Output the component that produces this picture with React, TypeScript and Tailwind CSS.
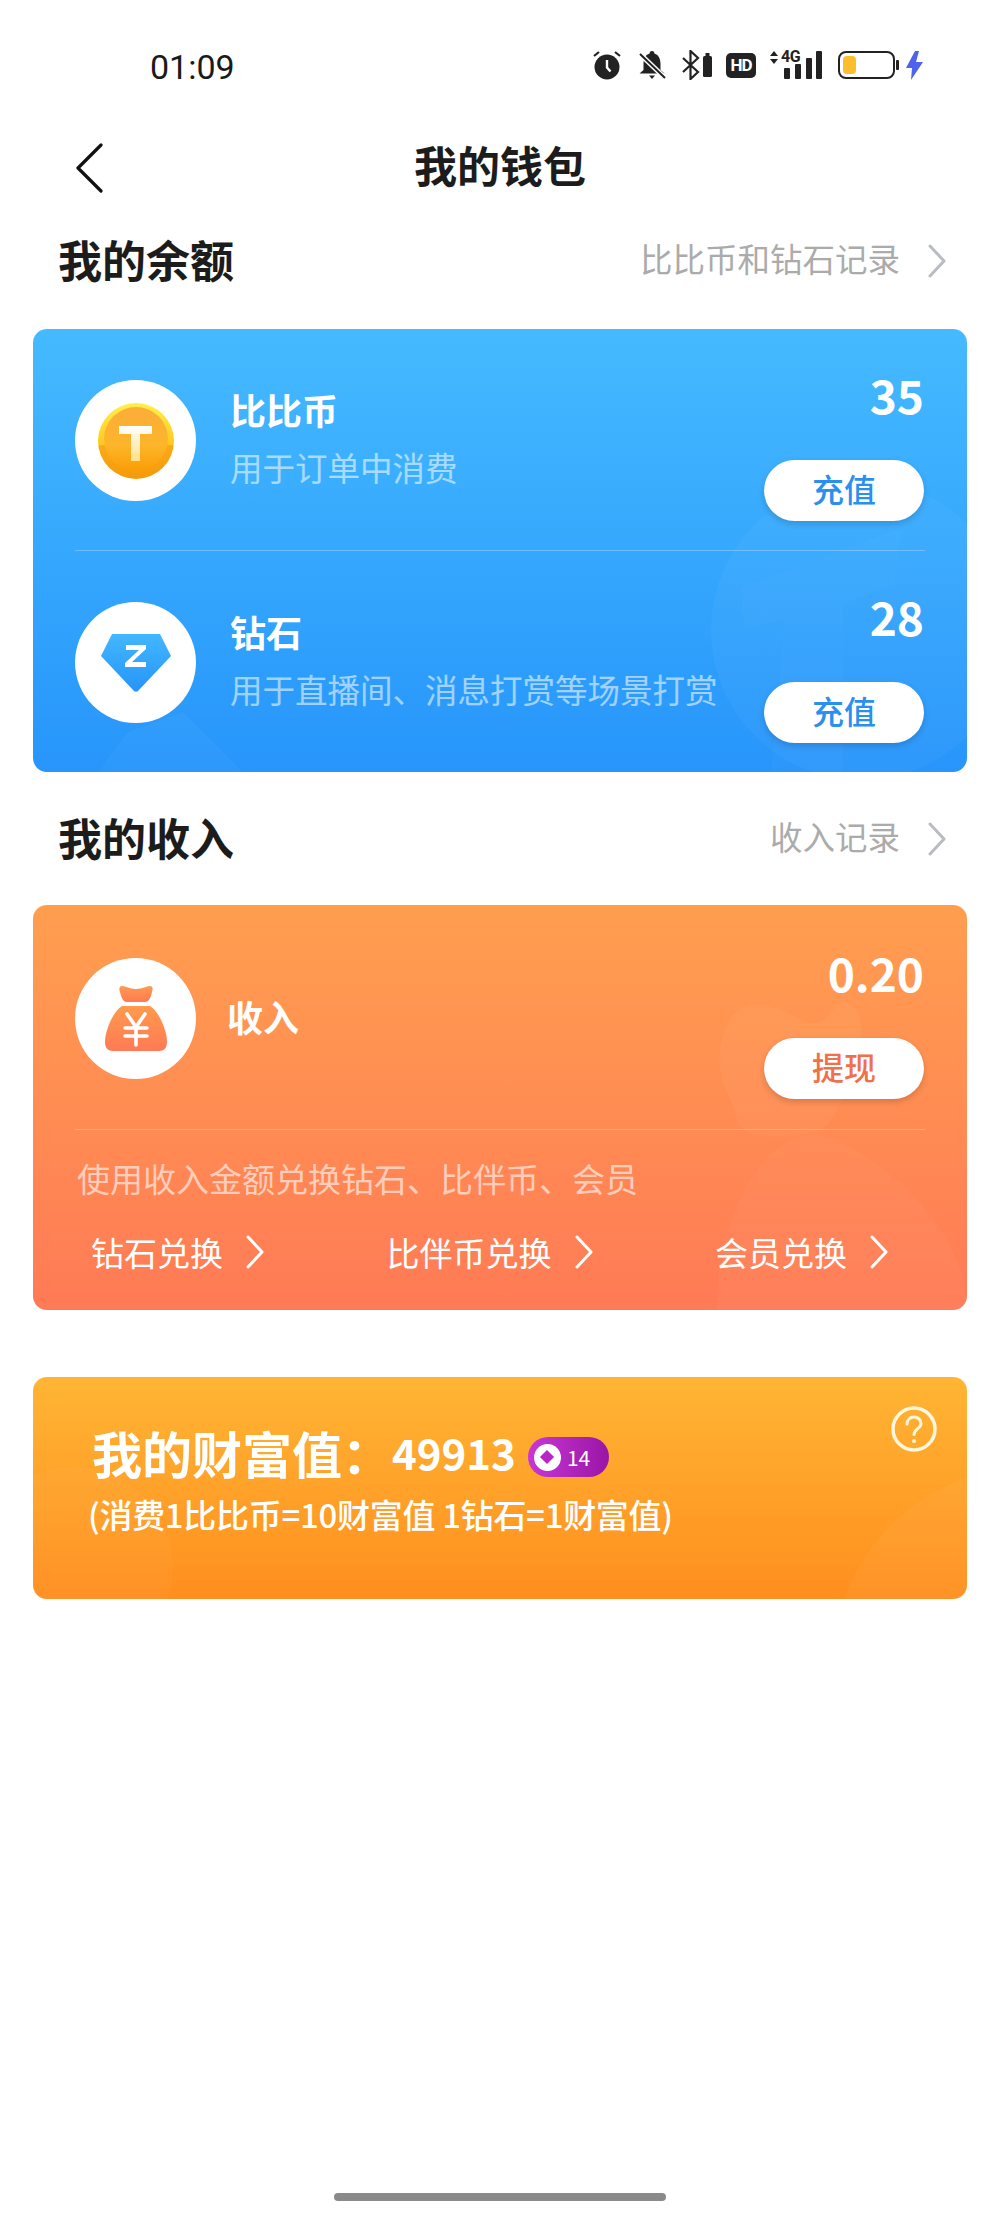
import React from 'react';

const Chevron = ({ className }: { className: string }) => (
  <svg viewBox="0 0 20 34" fill="none" className={className}>
    <path d="M3 2l14 15L3 32" stroke="currentColor" strokeWidth="3" strokeLinecap="round" strokeLinejoin="round" />
  </svg>
);

const StatusIcons = () => (
  <div className="flex items-center">
    <svg viewBox="0 0 30 30" className="w-[30px] h-[30px] text-[#222]">
      <circle cx="15" cy="17" r="12.5" fill="currentColor" />
      <path d="M15 10v7.5l3.5 4" stroke="#fff" strokeWidth="2.4" fill="none" />
      <path d="M2 6l5-4M28 6l-5-4" stroke="currentColor" strokeWidth="2.2" />
    </svg>
    <svg viewBox="0 0 30 30" className="w-[30px] h-[30px] ml-[15px] text-[#222]">
      <path d="M15 1c1.600 0 2.400 1 2.400 2.500C22 5 23.500 9 23.500 14v6l4 3.500H2.500l4-3.500v-6c0-5 1.500-9 6.100-10.500C12.600 2 13.400 1 15 1z" fill="currentColor" />
      <path d="M12 25.500h6l-3 3.500z" fill="currentColor" />
      <path d="M3 4l25 24" stroke="#fff" strokeWidth="5" />
      <path d="M3 4l25 24" stroke="currentColor" strokeWidth="2" />
    </svg>
    <svg viewBox="0 0 32 30" className="w-[32px] h-[30px] ml-[14px] text-[#222]">
      <path d="M2 8l15 14-7.500 7V1L17 8 2 22" stroke="currentColor" strokeWidth="2.200" fill="none" />
      <rect x="22" y="6" width="9" height="21" rx="1.500" fill="currentColor" />
      <rect x="24.500" y="3" width="4" height="3" fill="currentColor" />
    </svg>
    <div className="w-[30px] h-[25px] ml-[13px] bg-[#222] rounded-[5px] flex items-center justify-center font-['Roboto',sans-serif] font-bold text-white text-[17px] leading-none tracking-[-1px]">
      HD
    </div>
    <div className="relative w-[55px] h-[30px] ml-[11px] text-[#222]">
      <svg viewBox="0 0 55 30" className="absolute inset-0 w-full h-full">
        <path d="M3 6l4-5 4 5zM3 9l4 5 4-5z" fill="currentColor" />
        <rect x="17" y="18" width="6" height="11" rx="1" fill="currentColor" />
        <rect x="28" y="14" width="6" height="15" rx="1" fill="currentColor" />
        <rect x="39" y="8" width="6" height="21" rx="1" fill="currentColor" />
        <rect x="49" y="1" width="6" height="28" rx="1" fill="currentColor" />
      </svg>
      <span className="absolute left-[14px] top-[-2px] font-['Roboto',sans-serif] font-bold text-[16px] leading-[18px] tracking-[-0.5px]">4G</span>
    </div>
    <svg viewBox="0 0 61 28" className="w-[61px] h-[28px] ml-[16px]">
      <rect x="1" y="1" width="55" height="26" rx="7" fill="#fff" stroke="#222" strokeWidth="2" />
      <rect x="5" y="5" width="13" height="18" rx="4" fill="#fbbf2d" />
      <rect x="58" y="9" width="3" height="10" rx="1" fill="#222" />
    </svg>
    <svg viewBox="0 0 17 29" className="w-[17px] h-[29px] ml-[7px]">
      <path d="M9 0L0 17h6l-1 12 12-18H10l3-11z" fill="#4f63ea" />
    </svg>
  </div>
);

const SectionHead = ({ title, link }: { title: string; link: string }) => (
  <div className="h-[60px] pl-[58px] pr-[53px] flex items-center justify-between">
    <h2 className="pb-[5px] text-[44px] leading-none font-bold text-[#1c1c1c]">{title}</h2>
    <div className="flex items-center text-[#ababab]">
      <span className="pb-[5px] text-[32.5px] leading-none">{link}</span>
      <Chevron className="w-[20px] h-[34px] ml-[27px] text-[#b9bcc2]" />
    </div>
  </div>
);

const IconCircle = ({ children }: { children: React.ReactNode }) => (
  <div className="w-[121px] h-[121px] shrink-0 rounded-full bg-white flex items-center justify-center">{children}</div>
);

const AmountCol = ({ value, label, color }: { value: string; label: string; color: string }) => (
  <div className="ml-auto flex flex-col items-end shrink-0">
    <div className="h-[50px] text-[46px] leading-[42px] font-bold text-white">{value}</div>
    <button className={`mt-[37px] w-[160px] h-[61px] pb-[5px] rounded-full bg-white shadow-[0_3px_6px_rgba(0,0,0,0.16)] text-[32px] leading-none font-medium ${color}`}>
      {label}
    </button>
  </div>
);

const Coin = () => (
  <svg viewBox="0 0 76 76" className="w-[76px] h-[76px]">
    <defs>
      <linearGradient id="coinEdge" x1="0" y1="0" x2="0" y2="1">
        <stop offset="0" stopColor="#fff04a" />
        <stop offset="0.55" stopColor="#ffc81f" />
        <stop offset="0.56" stopColor="#fba917" />
        <stop offset="1" stopColor="#f59a0a" />
      </linearGradient>
      <linearGradient id="coinFace" x1="0" y1="0" x2="0" y2="1">
        <stop offset="0" stopColor="#fbad3a" />
        <stop offset="0.6" stopColor="#fdb52a" />
        <stop offset="1" stopColor="#fb9d06" />
      </linearGradient>
      <linearGradient id="coinT" x1="0" y1="0" x2="0" y2="1">
        <stop offset="0" stopColor="#fff" />
        <stop offset="1" stopColor="#ffe08a" />
      </linearGradient>
    </defs>
    <circle cx="38" cy="38" r="38" fill="url(#coinEdge)" />
    <circle cx="38" cy="36" r="32" fill="url(#coinFace)" />
    <path d="M21 23h33v8H42v27h-9V31H21z" fill="url(#coinT)" />
  </svg>
);

const Diamond = () => (
  <svg viewBox="0 0 70 58" className="w-[70px] h-[58px]">
    <defs>
      <linearGradient id="gemFill" x1="0" y1="0" x2="0" y2="1">
        <stop offset="0" stopColor="#43b7ff" />
        <stop offset="1" stopColor="#2694fa" />
      </linearGradient>
    </defs>
    <path d="M11 0h48l11 22-33 35q-2 1.500-4 0L0 22z" fill="url(#gemFill)" />
    <path d="M25 11h20v4L31 28h14v5H24v-4l14-13H25z" fill="#fff" />
  </svg>
);

const MoneyBag = () => (
  <svg viewBox="0 0 62 65" className="w-[62px] h-[65px]">
    <defs>
      <linearGradient id="bagFill" x1="0" y1="0" x2="0" y2="1">
        <stop offset="0" stopColor="#ff9a4d" />
        <stop offset="1" stopColor="#ff7a55" />
      </linearGradient>
    </defs>
    <path d="M17 0c4 0 7 3 14 3s10-3 14-3c3 0 3 3 2 6-1 5-3 10-7 10H22C18 16 16 11 15 6c-1-3-1-6 2-6z" fill="url(#bagFill)" />
    <path d="M17 20h28c9 5 17 25 17 36 0 6-3 9-8 9H8c-5 0-8-3-8-9 0-11 8-31 17-36z" fill="url(#bagFill)" />
    <path d="M22 28l9 13 9-13M20 42h22M20 50h22M31 41v18" stroke="#fff" strokeWidth="3.600" fill="none" strokeLinecap="round" />
  </svg>
);

const BalanceRow = ({ icon, title, sub, value }: { icon: React.ReactNode; title: string; sub: string; value: string }) => (
  <div className="relative h-[221px] pl-[42px] pr-[43px] flex items-start">
    <div className="mt-[51px]">
      <IconCircle>{icon}</IconCircle>
    </div>
    <div className="ml-[34px] mt-[58px] w-[495px] shrink-0">
      <div className="h-[44px] text-[36px] leading-[44px] font-bold text-white">{title}</div>
      <div className="mt-[16px] h-[40px] text-[32.5px] leading-[40px] whitespace-nowrap text-white/55">{sub}</div>
    </div>
    <div className="ml-auto pt-[44px]">
      <AmountCol value={value} label="充值" color="text-[#2b8ff0]" />
    </div>
  </div>
);

const ExchangeLink = ({ label }: { label: string }) => (
  <div className="flex items-center text-white">
    <span className="text-[33px] leading-[44px] whitespace-nowrap">{label}</span>
    <Chevron className="w-[20px] h-[34px] ml-[22px]" />
  </div>
);

export default function App() {
  return (
    <div className="w-full min-h-[2222px] bg-white relative font-['Noto_Sans_CJK_SC','Noto_Sans',sans-serif]">
      <div className="h-[127px] pt-[50px] pl-[150px] pr-[77px] flex items-start justify-between">
        <span className="font-['Roboto',sans-serif] text-[34px] leading-[34px] text-[#1a1a1a]">01:09</span>
        <StatusIcons />
      </div>

      <div className="relative h-[80px] flex items-center justify-center">
        <svg viewBox="0 0 28 50" fill="none" className="absolute left-[75px] top-[16px] w-[28px] h-[50px] text-[#111]">
          <path d="M26 2L3 25l23 23" stroke="currentColor" strokeWidth="3.200" strokeLinecap="round" strokeLinejoin="round" />
        </svg>
        <h1 className="pb-[5px] text-[43px] leading-none font-bold text-[#1c1c1c]">我的钱包</h1>
      </div>

      <div className="mt-[24px]">
        <SectionHead title="我的余额" link="比比币和钻石记录" />
      </div>

      <section className="relative mt-[38px] mx-[33px] rounded-[14px] overflow-hidden bg-linear-to-b from-[#45baff] to-[#2795fb]">
        <svg viewBox="0 0 256 292" className="absolute right-0 bottom-0 w-[256px] h-[292px]">
          <circle cx="150" cy="150" r="150" fill="#fff" fillOpacity="0.035" />
          <path d="M30 108l160-60-6 56-52 20 0 168H60l14-154-40 12z" fill="#fff" fillOpacity="0.02" />
        </svg>
        <svg viewBox="0 0 210 60" className="absolute left-0 bottom-0 w-[210px] h-[60px]">
          <path d="M65 60l30-40 55-20 60 60z" fill="#fff" fillOpacity="0.03" />
        </svg>
        <BalanceRow icon={<Coin />} title="比比币" sub="用于订单中消费" value="35" />
        <div className="relative mx-[42px] h-px bg-white/25" />
        <BalanceRow icon={<Diamond />} title="钻石" sub="用于直播间、消息打赏等场景打赏" value="28" />
      </section>

      <div className="mt-[37px]">
        <SectionHead title="我的收入" link="收入记录" />
      </div>

      <section className="relative mt-[36px] mx-[33px] rounded-[14px] overflow-hidden bg-linear-to-b from-[#ff9e4f] to-[#ff7a56]">
        <svg viewBox="0 0 255 310" className="absolute right-0 bottom-0 w-[255px] h-[310px]">
          <path d="M10 40C20 -5 55 0 90 20c30 15 30-30 50-15 25 20-5 100-30 125-40 10-80 10-85-10C20 95 0 75 10 40z" fill="#fff" fillOpacity="0.04" />
          <path d="M100 135c40 0 155 80 155 175H5C5 220 50 135 100 135z" fill="#fff" fillOpacity="0.03" />
        </svg>
        <div className="relative h-[224px] pl-[42px] pr-[43px] flex items-start">
          <div className="mt-[53px]">
            <IconCircle>
              <MoneyBag />
            </IconCircle>
          </div>
          <div className="ml-[31px] mt-[89px] h-[44px] text-[36px] leading-[44px] font-bold text-white">收入</div>
          <div className="ml-auto pt-[46px]">
            <AmountCol value="0.20" label="提现" color="text-[#f0704a]" />
          </div>
        </div>
        <div className="relative mx-[42px] h-px bg-white/25" />
        <div className="relative mt-[28px] pl-[44px] h-[40px] text-[33px] leading-[40px] whitespace-nowrap text-white/60">
          使用收入金额兑换钻石、比伴币、会员
        </div>
        <div className="relative mt-[32px] pl-[58px] pr-[78px] h-[80px] flex items-start justify-between">
          <ExchangeLink label="钻石兑换" />
          <ExchangeLink label="比伴币兑换" />
          <ExchangeLink label="会员兑换" />
        </div>
      </section>

      <section className="relative mt-[67px] mx-[33px] h-[222px] rounded-[14px] overflow-hidden bg-linear-to-b from-[#ffb534] to-[#ff8e1e]">
        <svg viewBox="0 0 935 222" className="absolute inset-0 w-full h-full">
          <circle cx="1000" cy="290" r="200" fill="#fff" fillOpacity="0.04" />
          <circle cx="40" cy="190" r="100" fill="#fff" fillOpacity="0.03" />
        </svg>
        <svg viewBox="0 0 46 46" fill="none" className="absolute right-[30px] top-[29px] w-[46px] h-[46px] text-[#fff6dc]">
          <circle cx="23" cy="23" r="21" stroke="currentColor" strokeWidth="3.500" />
          <path d="M16 18c0-4 3-7 7-7s7 3 7 6.500c0 5-7 5.500-7 11" stroke="currentColor" strokeWidth="3" strokeLinecap="round" />
          <circle cx="23" cy="35" r="2" fill="currentColor" />
        </svg>
        <div className="relative pt-[41px] pl-[59px] h-[109px] flex items-center text-white font-bold">
          <span className="text-[50px] leading-[60px] whitespace-nowrap">我的财富值：</span>
          <span className="text-[42px] leading-[60px]">49913</span>
          <span className="ml-[12px] mt-[10px] w-[81px] h-[40px] rounded-full bg-linear-to-r from-[#c936d6] to-[#9a14a6] flex items-center pl-[6px]">
            <span className="w-[27px] h-[27px] rounded-full bg-white flex items-center justify-center">
              <span className="w-[10px] h-[10px] rotate-45 bg-[#b824c8]" />
            </span>
            <span className="ml-[6px] text-[21px] leading-none font-normal">14</span>
          </span>
        </div>
        <div className="relative mt-[6px] pl-[55px] h-[44px] text-[33px] leading-[44px] whitespace-nowrap tracking-[-0.3px] text-white font-medium">
          (消费1比比币=10财富值 1钻石=1财富值)
        </div>
      </section>

      <div className="absolute left-[334px] top-[2193px] w-[332px] h-[8px] rounded-full bg-[#8a8a8a]" />
    </div>
  );
}
